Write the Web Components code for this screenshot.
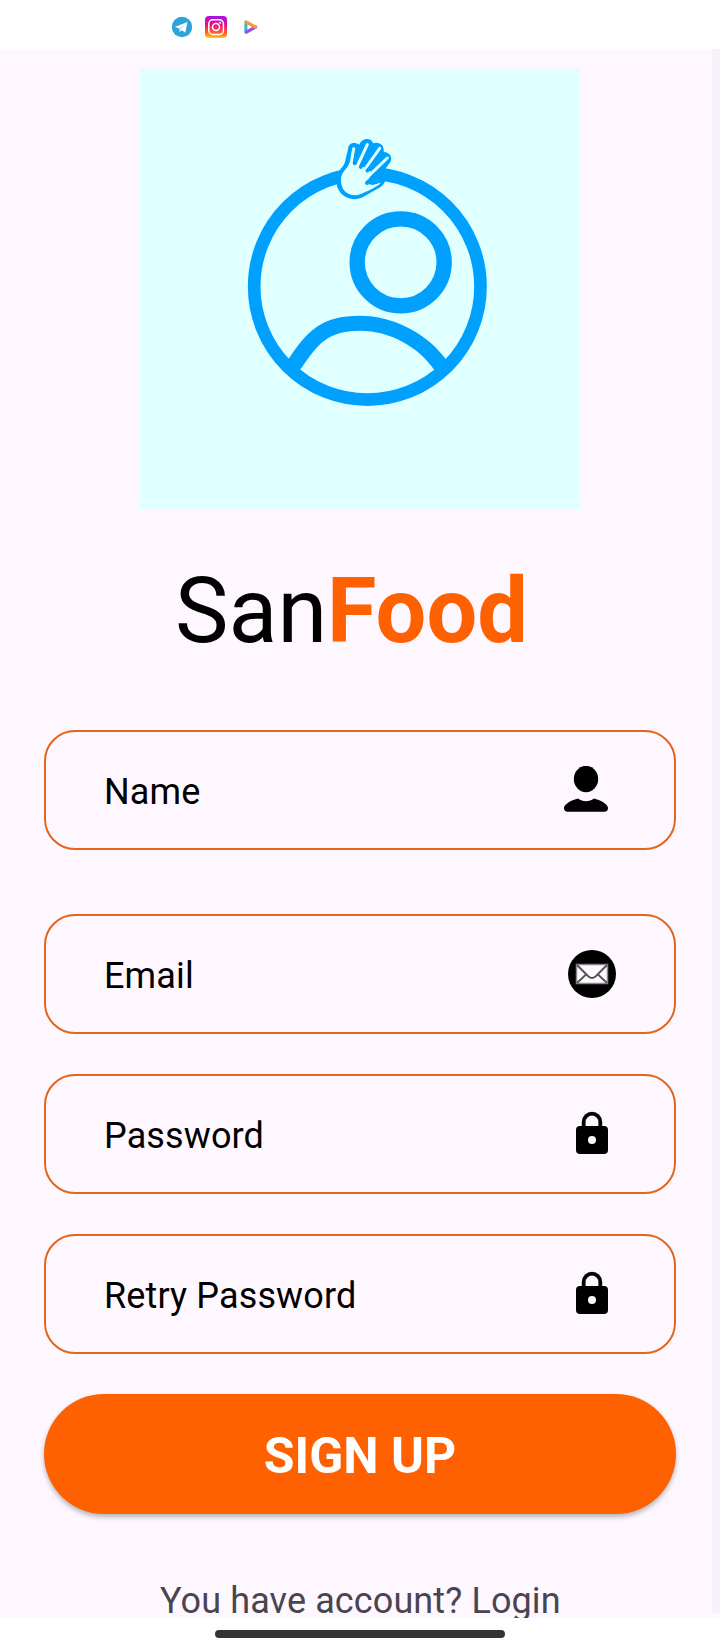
<!DOCTYPE html>
<html lang="en"><head><meta charset="utf-8"><title>SanFood – Sign up</title>
<style>html,body{margin:0;background:#fff;font-family:Roboto,sans-serif}body{width:720px;height:1650px;overflow:hidden}</style></head>
<body>
<sign-up-page></sign-up-page>
<script>
const define=(name,html)=>{
  const t=document.createElement('template');t.innerHTML=html;
  customElements.define(name,class extends HTMLElement{
    constructor(){super();this.attachShadow({mode:'open'}).append(t.content.cloneNode(true));}
  });
};
define('status-bar',`<style>
:host{display:flex;box-sizing:border-box;height:49px;background:#fff;padding:16px 0 0 171px;gap:12px}
svg{display:block;width:22px;height:22px}</style>
<svg viewBox="0 0 22 22"><circle cx="11" cy="11" r="10.2" fill="#2fa3d9"/><path d="M3.8 11 16.4 6l-2.1 10.7-3.4-2.5-2 1.9-.7-3.7z" fill="#fff"/><path d="m8.3 12.4 5.8-4.2-4.6 5-.5 2.7z" fill="#a9d5ec"/></svg>
<svg viewBox="0 0 22 22"><defs><linearGradient id="a" x1=".4" y1="0" x2=".35" y2="1"><stop stop-color="#a313e8"/><stop offset=".4" stop-color="#f00b80"/><stop offset=".75" stop-color="#ff602d"/><stop offset="1" stop-color="#ffd000"/></linearGradient></defs><rect width="22" height="22" rx="4" fill="url(#a)"/><g fill="none" stroke="#fff" stroke-width="1.5"><rect x="3.8" y="3.8" width="14.6" height="14.6" rx="4"/><circle cx="11" cy="11" r="3.5"/></g><circle cx="15.2" cy="6.8" r="1" fill="#fff"/></svg>
<svg viewBox="0 0 22 22"><path d="M7 6v10" stroke="#28bde8" stroke-width="3.2" stroke-linecap="round"/><path d="m7.4 16 9.2-5" stroke="#9a55e0" stroke-width="3.4" stroke-linecap="round"/><path d="m7 6 9.4 5" stroke="#f59a35" stroke-width="3.2" stroke-linecap="round"/><path d="M8.7 8.7v4.8l4-2.4z" fill="#fff"/></svg>`);
define('hero-logo',`<style>:host{display:block;width:440px;height:440px;background:#e0ffff}svg{display:block}</style>
<svg width="440" height="440" viewBox="0 0 440 440"><g transform="translate(90 51) scale(.33333)">
<g fill="none" stroke="#00a0ff"><circle cx="412" cy="499.500" r="339.5" stroke-width="38"/><circle cx="512" cy="427" r="130.5" stroke-width="46"/></g>
<path fill="#00a0ff" d="M175 718C232 632 275 587 390 587C490 587 592 641 648 718L640 760L613 750C565 680 480 632 390 632C288 632 262 676 210 750L185 760Z"/>
<g transform="translate(270 30)">
<path d="M51 138C54 119 70 113 75 96L84 57C86 38 103 35 118 44C124 24 153 20 160 40C178 34 194 46 191 66C209 66 219 82 211 96L192 122L195 151C196 162 180 173 170 178L128 202C103 214 70 206 56 180C49 168 47 151 51 138Z" fill="#00a0ff"/>
<path d="M63 150C63 123 82 120 88 98L126 108L154 126L143 161L158 165L182 158C178 166 165 170 154 178L123 192C100 201 78 193 68 175Q62 163 63 150Z" fill="#e0ffff"/>
<g stroke="#e0ffff" stroke-linecap="round" stroke-width="9"><path d="M101 56 92 109"/><path d="M142 44 112 108"/><path d="m179 55-46 65"/><path d="m202 84-58 56"/></g>
<g stroke="#00a0ff" stroke-linecap="round" stroke-width="11"><path d="m113 60-9 40"/><path d="m157 59-35 52"/><path d="m188 75-46 47"/><path d="m177 127-36 31"/><path d="m179 146-38 13"/></g>
</g></g></svg>`);
define('brand-title',`<style>:host{display:block;font-size:90px;line-height:106px;white-space:nowrap;color:#000}b{color:#ff6000;font-weight:700}</style>San<b>Food</b>`);
define('form-field',`<style>:host{display:flex;box-sizing:border-box;width:632px;height:120px;border:2px solid #e4651d;border-radius:31px;align-items:center;justify-content:space-between;padding:2px 58px 0 58px;font-size:36px;line-height:42px;letter-spacing:.13px;color:#000}
span{padding-top:2px}
::slotted(svg){display:block;width:48px;height:48px;margin-top:-2px}</style><span><slot></slot></span><slot name="icon"></slot>`);
define('primary-button',`<style>:host{display:block}button{display:block;width:632px;height:120px;border:0;border-radius:60px;background:#ff6000;color:#fff;font:700 50px/58px Roboto,sans-serif;padding:4px 0 0;box-shadow:0 3px 5px rgba(0,0,0,.28)}</style><button><slot></slot></button>`);
define('gesture-bar',`<style>:host{display:flex;height:32px;background:#fff;justify-content:center}i{display:block;width:290px;height:8px;border-radius:4px;background:#323432;margin-top:12px}</style><i></i>`);
const lock='<svg slot="icon" viewBox="0 0 48 48"><path d="M15.7 18v-6a8.3 8.3 0 0 1 16.6 0v6" fill="none" stroke="#000" stroke-width="3.8"/><path fill-rule="evenodd" d="M12 16h24a4 4 0 0 1 4 4v20a4 4 0 0 1-4 4H12a4 4 0 0 1-4-4V20a4 4 0 0 1 4-4Zm12 10a4 4 0 1 0 0 8a4 4 0 0 0 0-8Z"/></svg>';
define('sign-up-page',`<style>:host{display:block;width:720px}
main{display:grid;grid-template-columns:712px 8px;height:1569px;background:#fef7ff;overflow:hidden}
.c{display:flex;flex-direction:column;align-items:flex-start;height:1569px}
.t{background:#f7f1f9;height:1564px}
hero-logo,brand-title,form-field,primary-button,p{flex:none}
hero-logo{margin:20px 0 0 140px}
brand-title{margin:50px 0 0 175px}
.n{margin:65px 0 0 44px}.e{margin:64px 0 0 44px}.p{margin:40px 0 0 44px}
.n svg{transform:translateX(-6px)}
p{margin:66px 0 0 160px;font-size:36px;line-height:42px;color:#49454f;white-space:nowrap;letter-spacing:.11px}</style>
<status-bar></status-bar>
<main><div class="c"><hero-logo></hero-logo><brand-title></brand-title>
<form-field class="n">Name<svg slot="icon" viewBox="0 0 48 48"><ellipse cx="24" cy="13" rx="12.2" ry="13.2"/><path d="M2 42c0-4 8-8 14-9.500 5 3.500 11 3.500 16 0C38 34 46 38 46 42q0 3.700-3.700 3.700H5.700Q2 45.700 2 42Z"/></svg></form-field>
<form-field class="e">Email<svg slot="icon" viewBox="0 0 48 48"><circle cx="24" cy="24" r="24"/><path d="M8.500 14.500h31v19h-31z" fill="#fef7ff" stroke="#888" stroke-width="1.5"/><path d="m9 15 11.500 11.500q3.500 3 7 0L39 15M9 33l9-8.500M39 33l-9-8.500" fill="none" stroke="#555" stroke-width="1.8"/></svg></form-field>
<form-field class="p">Password${lock}</form-field>
<form-field class="p">Retry Password${lock}</form-field>
<primary-button class="p">SIGN UP</primary-button>
<p>You have account? Login</p></div><div class="t"></div></main>
<gesture-bar></gesture-bar>`);
</script></body></html>
